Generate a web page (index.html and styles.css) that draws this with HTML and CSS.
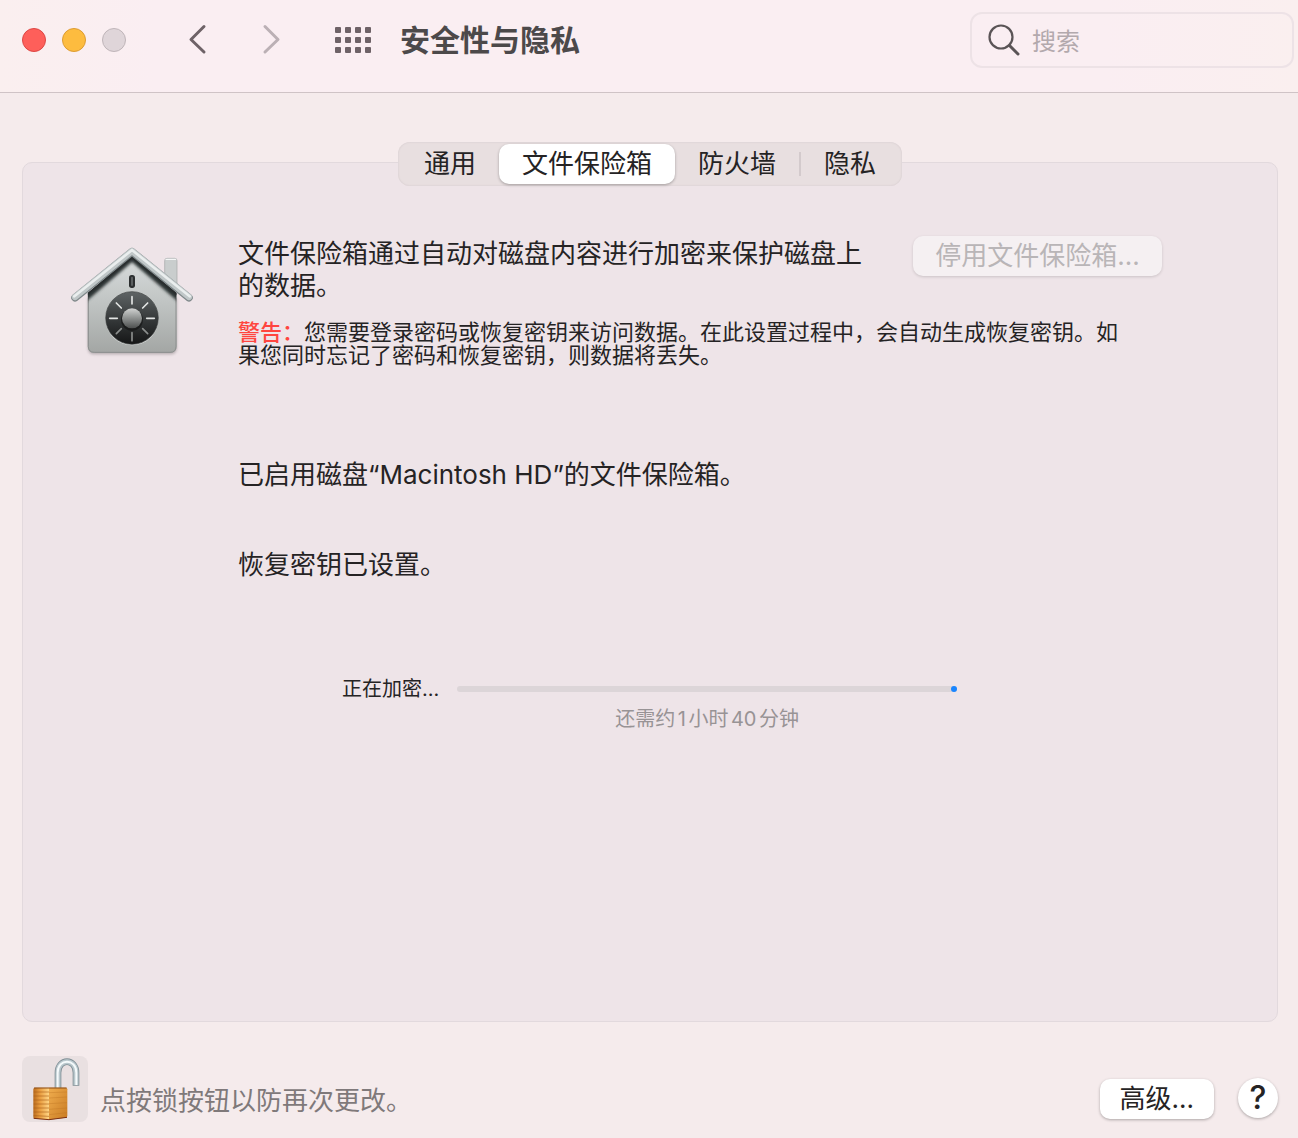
FILE: index.html
```
<!DOCTYPE html>
<html lang="zh-CN">
<head>
  <meta charset="utf-8">
  <meta name="viewport" content="width=device-width, initial-scale=1">
  <title>安全性与隐私</title>
  <link rel="stylesheet" href="styles.css">
</head>
<body>
  <header class="toolbar">
    <div class="lights">
      <button class="light close" aria-label="关闭"></button>
      <button class="light minimize" aria-label="最小化"></button>
      <button class="light zoom" aria-label="缩放" disabled></button>
    </div>
    <nav class="history">
      <button class="icon-btn" aria-label="后退">
        <svg width="20" height="32" viewBox="0 0 20 32"><path d="M16 2.500 3 15.500 16 28" fill="none" stroke="#6e6267" stroke-width="3" stroke-linecap="round" stroke-linejoin="round"/></svg>
      </button>
      <button class="icon-btn" aria-label="前进" disabled>
        <svg width="20" height="32" viewBox="0 0 20 32"><path d="M3 2.500 16 15.500 3 28" fill="none" stroke="#bbb0b5" stroke-width="3" stroke-linecap="round" stroke-linejoin="round"/></svg>
      </button>
    </nav>
    <button class="icon-btn show-all" aria-label="显示全部">
      <svg width="36" height="26" viewBox="0 0 36 26" fill="#6e6267">
        <rect x="0" y="0" width="6" height="6" rx="1"/><rect x="10" y="0" width="6" height="6" rx="1"/><rect x="20" y="0" width="6" height="6" rx="1"/><rect x="30" y="0" width="6" height="6" rx="1"/>
        <rect x="0" y="10" width="6" height="6" rx="1"/><rect x="10" y="10" width="6" height="6" rx="1"/><rect x="20" y="10" width="6" height="6" rx="1"/><rect x="30" y="10" width="6" height="6" rx="1"/>
        <rect x="0" y="20" width="6" height="6" rx="1"/><rect x="10" y="20" width="6" height="6" rx="1"/><rect x="20" y="20" width="6" height="6" rx="1"/><rect x="30" y="20" width="6" height="6" rx="1"/>
      </svg>
    </button>
    <h1>安全性与隐私</h1>
    <label class="search">
      <svg width="32" height="32" viewBox="0 0 32 32" fill="none" stroke="#5a5456" stroke-linecap="round"><circle cx="13" cy="13" r="11.500" stroke-width="2.200"/><path d="M21.500 21.500 30 30" stroke-width="3"/></svg>
      <input type="search" placeholder="搜索" aria-label="搜索">
    </label>
  </header>

  <main>
    <div class="tabs" role="tablist">
      <button role="tab" aria-selected="false">通用</button>
      <button role="tab" aria-selected="true" class="active">文件保险箱</button>
      <button role="tab" aria-selected="false">防火墙</button>
      <span class="divider"></span>
      <button role="tab" aria-selected="false">隐私</button>
    </div>

    <section class="panel" role="tabpanel">
      <svg class="vault" width="125" height="115" viewBox="30 30 375 345" aria-hidden="true">
        <defs>
          <linearGradient id="wall" x1="0" y1="0" x2="0" y2="1">
            <stop offset="0" stop-color="#d9dddd"/><stop offset="0.500" stop-color="#bfc3c2"/><stop offset="1" stop-color="#a3a6a4"/>
          </linearGradient>
          <linearGradient id="dial" x1="0" y1="0" x2="0" y2="1">
            <stop offset="0" stop-color="#5f6465"/><stop offset="0.600" stop-color="#303334"/><stop offset="1" stop-color="#151616"/>
          </linearGradient>
          <linearGradient id="knob" x1="0" y1="0" x2="0" y2="1">
            <stop offset="0" stop-color="#d0d2d1"/><stop offset="0.500" stop-color="#8d908f"/><stop offset="1" stop-color="#4d4f4f"/>
          </linearGradient>
          <clipPath id="wallClip"><path d="M83 174 216 62l134 112v160q0 20-20 20H103q-20 0-20-20z"/></clipPath>
          <filter id="soft" x="-20%" y="-20%" width="140%" height="140%"><feGaussianBlur stdDeviation="5"/></filter>
        </defs>
        <path d="M84 190h266v148q0 20-20 20H104q-20 0-20-20z" fill="#8d8488" opacity="0.600" filter="url(#soft)"/>
        <rect x="314" y="70" width="37" height="90" rx="7" fill="#c9cdcd" stroke="#a3a8a8" stroke-width="2"/>
        <path d="M318 73h29" stroke="#f4f6f6" stroke-width="4" stroke-linecap="round"/>
        <path d="M83 174 216 62l134 112v160q0 20-20 20H103q-20 0-20-20z" fill="url(#wall)"/>
        <path d="M85 190v144q0 18 18 18h227q18 0 18-18V190" fill="none" stroke="#8c8f8e" stroke-width="3"/>
        <g clip-path="url(#wallClip)">
          <path d="M60 198 216 64l156 134" fill="none" stroke="#2b3031" stroke-width="26" filter="url(#soft)"/>
          <path d="M60 186 216 58l156 128" fill="none" stroke="#292d2e" stroke-width="20"/>
        </g>
        <path d="M45 188 216 50 387 188" fill="none" stroke="#7f888a" stroke-width="23" stroke-linecap="round" stroke-linejoin="round"/>
        <path d="M45 186 216 48 387 186" fill="none" stroke="#c0c7c8" stroke-width="19" stroke-linecap="round" stroke-linejoin="round"/>
        <path d="M43 184 216 45 389 184" fill="none" stroke="#eaeeee" stroke-width="8" stroke-linecap="round" stroke-linejoin="round"/>
        <rect x="207" y="120" width="18" height="39" rx="8" fill="#2b2e2f"/>
        <path d="M216 128v22" stroke="#5b5f60" stroke-width="6" stroke-linecap="round"/>
        <circle cx="216" cy="251" r="80" fill="#dfe2e1"/>
        <circle cx="216" cy="249" r="79" fill="url(#dial)" stroke="#3c3f40" stroke-width="2"/>
        <g stroke="#e2e4e3" stroke-width="5" stroke-linecap="round">
          <path d="M216 185v22M169 204l15 15M263 204l-15 15M149 250h23M260 250h23"/>
          <path d="M169 296l15-15M263 296l-15-15M216 293v24" stroke="#8b8e8d"/>
        </g>
        <circle cx="216" cy="254" r="33" fill="#111" opacity="0.600"/>
        <circle cx="216" cy="250" r="30" fill="url(#knob)"/>
      </svg>

      <div class="content">
        <div class="intro">
          <p>文件保险箱通过自动对磁盘内容进行加密来保护磁盘上的数据。</p>
          <button class="btn turn-off" disabled>停用文件保险箱...</button>
        </div>
        <p class="warning"><strong>警告：</strong>您需要登录密码或恢复密钥来访问数据。在此设置过程中，会自动生成恢复密钥。如果您同时忘记了密码和恢复密钥，则数据将丢失。</p>
        <p class="status">已启用磁盘“Macintosh HD”的文件保险箱。</p>
        <p class="status">恢复密钥已设置。</p>
        <div class="encrypting">
          <span id="encrypt-label">正在加密...</span>
          <div class="bar" role="progressbar" aria-labelledby="encrypt-label"><div class="bar-dot"></div></div>
          <span class="remaining">还需约1小时40分钟</span>
        </div>
      </div>
    </section>
  </main>

  <footer>
    <button class="lock" id="lock" aria-label="锁定">
      <svg width="66" height="66" viewBox="36 138 198 198">
        <defs>
          <linearGradient id="brassLeft" x1="0" y1="0" x2="1" y2="0">
            <stop offset="0" stop-color="#b86a1d"/><stop offset="0.400" stop-color="#e89b3d"/><stop offset="1" stop-color="#ffd585"/>
          </linearGradient>
          <linearGradient id="brassRight" x1="0" y1="0" x2="1" y2="1">
            <stop offset="0" stop-color="#f0ad4e"/><stop offset="1" stop-color="#c97b22"/>
          </linearGradient>
        </defs>
        <path d="M144 240v-52c0-44 54-44 54 0v39" fill="none" stroke="#7f8e95" stroke-width="20"/>
        <path d="M144 240v-52c0-44 54-44 54 0v37" fill="none" stroke="#b9c7cc" stroke-width="15"/>
        <path d="M143 240v-52c0-44 56-44 56 0v37" fill="none" stroke="#f5fafb" stroke-width="6"/>
        <path d="M70 238q0-5 5-5h42v96l-42-3q-5 0-5-5z" fill="url(#brassLeft)"/>
        <path d="M117 233h50q5 0 5 5v80q0 4-5 5l-50 6z" fill="url(#brassRight)"/>
        <path d="M71 246h46M71 258h46M71 270h46M71 282h46M71 294h46M71 306h46M71 317l46 2" stroke="#a85d18" stroke-width="3" opacity="0.600"/>
        <path d="M117 248l54-2M117 264l54-3M117 281l54-3M117 298l54-4M117 314l54-6" stroke="#b8701f" stroke-width="2" opacity="0.500"/>
        <path d="M72 234h98" stroke="#8a4b14" stroke-width="3"/>
        <path d="M71 325l46 4 54-7" fill="none" stroke="#7a2f12" stroke-width="3"/>
      </svg>
    </button>
    <label class="lock-text" for="lock">点按锁按钮以防再次更改。</label>
    <button class="btn advanced">高级...</button>
    <button class="help" aria-label="帮助">?</button>
  </footer>
</body>
</html>
```
FILE: styles.css
```
* {
  box-sizing: border-box;
}
body {
  margin: 0;
  min-height: 100vh;
  display: flex;
  flex-direction: column;
  background: #f5ebec;
  color: #252324;
  font-family: Inter, "Noto Sans CJK SC", sans-serif;
  font-size: 26px;
  line-height: 32px;
}
p, h1 {
  margin: 0;
}
button {
  border: none;
  padding: 0;
  font: inherit;
  color: inherit;
}
svg {
  display: block;
}

/* toolbar */
.toolbar {
  display: flex;
  align-items: center;
  padding: 12px 4px 24px 22px;
  background: linear-gradient(90deg, #faefef 0%, #faeef2 12%, #faeef2 85%, #faefef 100%);
  border-bottom: 1px solid #cfc3c6;
}
.lights {
  display: flex;
  gap: 16px;
}
.light {
  width: 24px;
  height: 24px;
  border-radius: 50%;
  border: 1px solid #dd4744;
  background: #fe5f5a;
}
.light.minimize {
  border-color: #dd9c32;
  background: #fdbc3f;
}
.light.zoom {
  border-color: #bfb5b9;
  background: #dfd5d9;
}
.history {
  display: flex;
  gap: 54px;
  margin: 0 53px 0 62px;
}
.icon-btn {
  background: none;
}
h1 {
  margin-left: 29px;
  font-size: 30px;
  font-weight: 700;
  color: #4c494a;
}
.search {
  display: flex;
  align-items: center;
  gap: 12px;
  width: 324px;
  height: 56px;
  margin-left: auto;
  padding: 0 16px;
  border: 2px solid #ede2e6;
  border-radius: 12px;
}
.search input {
  flex: 1;
  min-width: 0;
  padding: 3px 0 0;
  border: none;
  outline: none;
  background: none;
  font: inherit;
  font-size: 24px;
}
.search input::placeholder {
  color: #b3a9ad;
}

/* tabs + panel */
main {
  flex: 1;
  display: flex;
  flex-direction: column;
  padding: 49px 20px 0 22px;
}
.tabs {
  position: relative;
  align-self: center;
  display: flex;
  align-items: center;
  height: 44px;
  margin-bottom: -24px;
  padding: 2px 3px;
  border-radius: 12px;
  background: #e8dfe0;
  box-shadow: inset 0 0 2px #cfc5c8;
}
.tabs button {
  height: 40px;
  padding: 0 23px;
  border-radius: 10px;
  background: none;
}
.tabs .active {
  background: #fff;
  box-shadow: 0 1px 3px rgba(0, 0, 0, 0.3);
}
.divider {
  width: 2px;
  height: 24px;
  background: #d3cacc;
}
.panel {
  flex: 1;
  display: flex;
  align-items: flex-start;
  gap: 43px;
  padding: 73px 115px 40px 47px;
  border: 1px solid #e2d9dd;
  border-radius: 10px;
  background: #eee4e8;
}
.vault {
  flex: none;
  margin-top: 9px;
}
.content {
  flex: 1;
}
.intro {
  display: flex;
  align-items: flex-start;
  gap: 40px;
}
.intro p {
  flex: 1;
  padding-top: 2px;
}
.btn {
  height: 40px;
  padding: 0 20px;
  border-radius: 10px;
  background: #fff;
  box-shadow: 0 1px 3px rgba(0, 0, 0, 0.3);
}
.turn-off {
  width: 249px;
  background: #f5f0f2;
  color: #b9b5b7;
  box-shadow: 0 1px 3px rgba(0, 0, 0, 0.15);
}
.warning {
  margin: 19px 24px 92px 0;
  font-size: 22px;
  line-height: 23px;
}
.warning strong {
  font-weight: 500;
  color: #ff453f;
}
.status {
  margin-bottom: 58px;
}
.encrypting {
  display: grid;
  grid-template-columns: auto 1fr;
  align-items: center;
  column-gap: 18px;
  margin-top: 93px;
  padding: 0 205px 0 104px;
  font-size: 20px;
  line-height: 30px;
}
.bar {
  display: flex;
  justify-content: flex-end;
  height: 6px;
  border-radius: 3px;
  background: #dcd5d8;
}
.bar-dot {
  width: 6px;
  border-radius: 3px;
  background: #1a85ff;
}
.remaining {
  grid-column: 2;
  text-align: center;
  text-autospace: normal;
  color: #989395;
}

/* footer */
footer {
  display: flex;
  align-items: center;
  padding: 34px 20px 16px 22px;
}
.lock {
  border-radius: 8px;
  background: #e9e0e1;
}
.lock-text {
  margin: 24px auto 0 12px;
  color: #7f797a;
}
.advanced {
  margin: 20px 24px 0 0;
}
.help {
  width: 40px;
  height: 40px;
  margin-top: 18px;
  border-radius: 50%;
  background: #fff;
  box-shadow: 0 1px 3px rgba(0, 0, 0, 0.3);
  font-size: 32px;
  font-weight: 500;
}
```
